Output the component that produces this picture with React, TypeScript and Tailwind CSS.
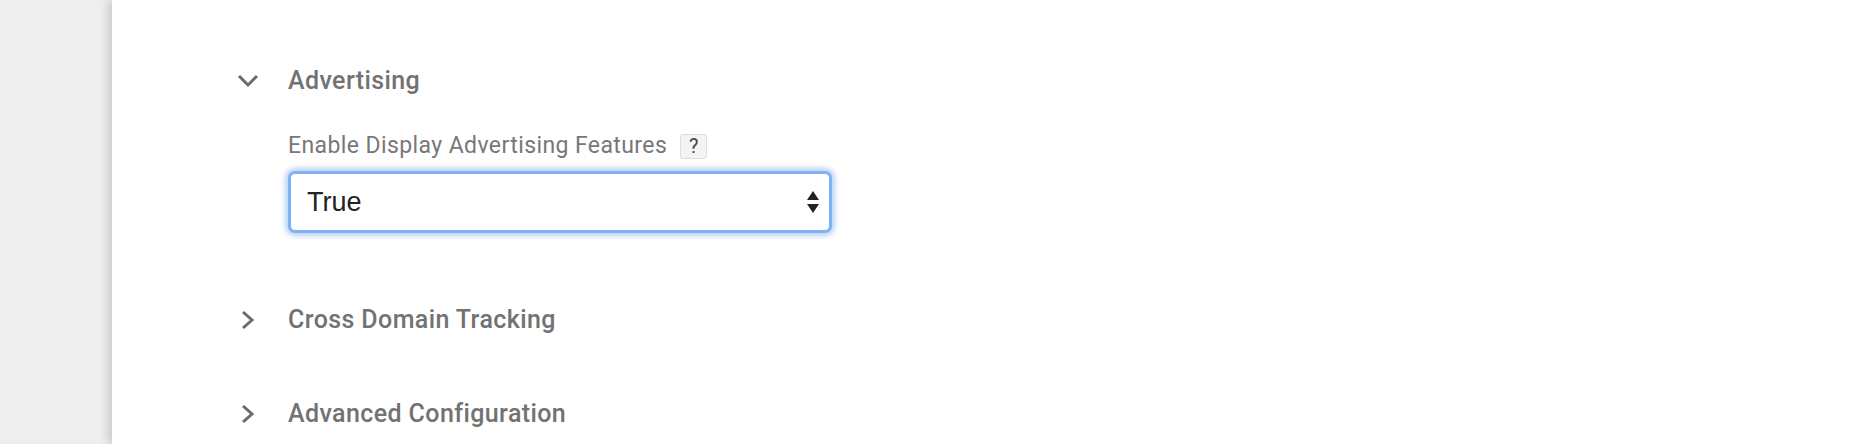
import React from "react";

const ChevronDown = () => (
  <svg width="22" height="14" viewBox="0 0 22 14" className="block">
    <polyline points="2,2 11,11 20,2" fill="none" stroke="#6b6b6b" strokeWidth="3" />
  </svg>
);

const ChevronRight = () => (
  <svg width="14" height="20" viewBox="0 0 14 20" className="block">
    <polyline points="2,2 11,10 2,18" fill="none" stroke="#6b6b6b" strokeWidth="3" />
  </svg>
);

const Section = ({ title, open }: { title: string; open?: boolean }) => (
  <div className="flex h-[32px] items-center">
    <div className="flex w-[50px] shrink-0 items-center">
      {open ? (
        <div className="ml-[-1px]">
          <ChevronDown />
        </div>
      ) : (
        <div className="ml-[3px]">
          <ChevronRight />
        </div>
      )}
    </div>
    <span className="text-[25px] font-medium tracking-[0.4px] text-[#727272]">{title}</span>
  </div>
);

export default function App() {
  return (
    <div className="flex h-[444px] w-full bg-[#eeeeee] font-['Roboto',sans-serif]">
      <div className="w-[112px] shrink-0" />
      <div className="flex-1 bg-white pl-[126px] pt-[65px] shadow-[-3px_0_10px_rgba(0,0,0,0.18)]">
        <Section title="Advertising" open />

        <div className="ml-[50px] mt-[37px]">
          <div className="flex h-[24px] items-center gap-[13px]">
            <span className="text-[23px] tracking-[0.4px] text-[#777777]">Enable Display Advertising Features</span>
            <span className="flex h-[25px] w-[27px] items-center justify-center rounded-[3px] border border-[#dddddd] bg-[#f4f4f4] text-[20px] text-[#444444]">
              ?
            </span>
          </div>

          <div className="mt-[13px] flex h-[62px] w-[544px] items-center justify-between rounded-[7px] border-[3px] border-[#7fb2f2] bg-white pl-[16px] pr-[9px] shadow-[0_0_5px_3px_rgba(120,170,240,0.5)]">
            <span className="font-['Liberation_Sans',Arial,sans-serif] text-[27px] text-[#222222]">True</span>
            <svg width="14" height="24" viewBox="0 0 14 24">
              <polygon points="7,1 13,10 1,10" fill="#222" />
              <polygon points="1,14 13,14 7,23" fill="#222" />
            </svg>
          </div>
        </div>

        <div className="mt-[71px]">
          <Section title="Cross Domain Tracking" />
        </div>
        <div className="mt-[62px]">
          <Section title="Advanced Configuration" />
        </div>
      </div>
    </div>
  );
}
